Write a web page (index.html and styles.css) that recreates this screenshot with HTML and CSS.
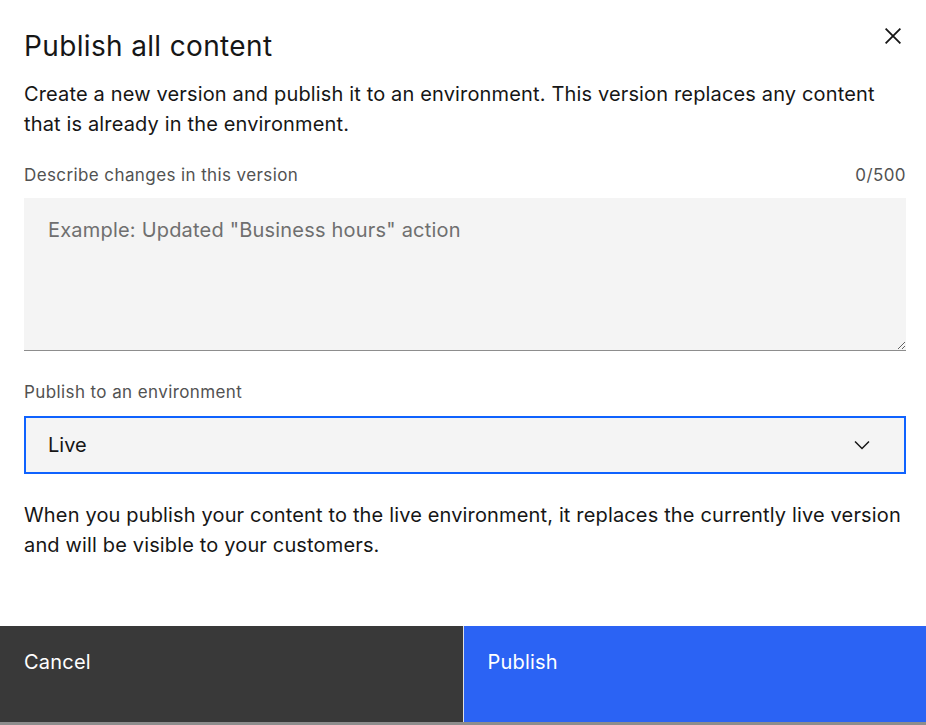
FILE: index.html
```html
<!DOCTYPE html>
<html lang="en">
<head>
<meta charset="utf-8">
<title>Publish all content</title>
<link rel="stylesheet" href="styles.css">
</head>
<body>
<div class="modal" role="dialog" aria-labelledby="modal-title">
  <header class="modal-header">
    <h2 class="modal-title" id="modal-title">Publish all content</h2>
    <button class="modal-close" type="button" aria-label="Close">
      <svg width="16" height="16" viewBox="0 0 16 16" aria-hidden="true"><path d="M0.6 0.6L15.4 15.4M15.4 0.6L0.6 15.4" stroke="#161616" stroke-width="1.8" fill="none"/></svg>
    </button>
  </header>
  <div class="modal-content">
    <p class="intro">Create a new version and publish it to an environment. This version replaces any content that is already in the environment.</p>
    <div class="field">
      <div class="label-row">
        <label class="label" for="changes">Describe changes in this version</label>
        <span class="counter">0/500</span>
      </div>
      <textarea class="textarea" id="changes" placeholder="Example: Updated &quot;Business hours&quot; action"></textarea>
    </div>
    <div class="field">
      <label class="label" for="env">Publish to an environment</label>
      <div class="select" id="env">
        <span class="select-value">Live</span>
        <svg class="chevron" width="24" height="24" viewBox="0 0 16 16" aria-hidden="true"><path d="M8 11L3 6 3.7 5.3 8 9.6 12.3 5.3 13 6z" fill="#161616"/></svg>
      </div>
    </div>
    <p class="helper">When you publish your content to the live environment, it replaces the currently live version and will be visible to your customers.</p>
  </div>
  <footer class="modal-footer">
    <button class="btn btn-secondary" type="button">Cancel</button>
    <button class="btn btn-primary" type="button">Publish</button>
  </footer>
</div>
</body>
</html>
```

FILE: styles.css
```css
* { box-sizing: border-box; }
html, body { margin: 0; padding: 0; }
html { background: #8d8d8d; }
body {
  font-family: Inter, "Noto Sans", sans-serif;
  color: #161616;
}
.modal {
  background: #ffffff;
  width: 926px;
  height: 722px;
  display: flex;
  flex-direction: column;
}
.modal-header {
  display: flex;
  justify-content: space-between;
  align-items: flex-start;
  padding: 25px 25px 0 24px;
}
.modal-title {
  margin: 0;
  font-size: 28px;
  font-weight: 400;
  line-height: 42px;
  letter-spacing: 0.35px;
}
.modal-close {
  border: 0;
  background: transparent;
  padding: 0;
  width: 16px;
  height: 16px;
  margin-top: 3px;
  display: flex;
  cursor: pointer;
}
.modal-content {
  flex: 1;
  padding: 12px 20px 0 24px;
}
.intro, .helper {
  margin: 0;
  font-size: 20px;
  line-height: 30px;
  letter-spacing: 0.15px;
}
.field { margin-top: 24px; }
.label-row {
  display: flex;
  justify-content: space-between;
}
.label, .counter {
  font-size: 17px;
  line-height: 24px;
  letter-spacing: 0.4px;
  color: #525252;
}
.label { display: block; }
.textarea {
  display: block;
  width: 100%;
  height: 153px;
  margin-top: 11px;
  border: 0;
  border-bottom: 1px solid #8d8d8d;
  background: #f4f4f4;
  padding: 17px 24px;
  font-family: inherit;
  font-size: 20px;
  line-height: 30px;
  letter-spacing: 0.2px;
  color: #161616;
  resize: vertical;
  outline: none;
}
.textarea::placeholder { color: #6f6f6f; }
.field + .field { margin-top: 29px; }
.select {
  margin-top: 12px;
  height: 58px;
  background: #f4f4f4;
  border: 2px solid #0f62fe;
  display: flex;
  align-items: center;
  justify-content: space-between;
  padding: 0 30px 0 22px;
  font-size: 20px;
}
.helper { margin-top: 26px; }
.modal-footer {
  display: flex;
  height: 96px;
  gap: 1px;
  background: #e0e0e0;
}
.btn {
  flex: 1;
  border: 0;
  margin: 0;
  text-align: left;
  padding: 21px 24px 0;
  display: flex;
  align-items: flex-start;
  font-family: inherit;
  font-size: 20px;
  line-height: 30px;
  letter-spacing: 0.2px;
  color: #ffffff;
  cursor: pointer;
}
.btn-secondary { background: #393939; }
.btn-primary { background: #2b63f4; }
```
